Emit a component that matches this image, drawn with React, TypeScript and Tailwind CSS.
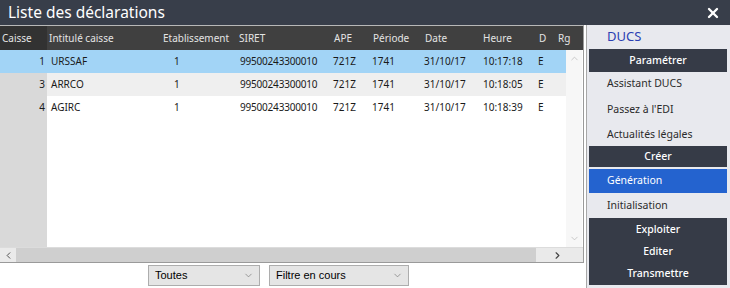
import React from "react";
import { X, ChevronUp, ChevronDown, ChevronLeft, ChevronRight } from "lucide-react";

type Row = { caisse: string; nom: string; etab: string; siret: string; ape: string; periode: string; date: string; heure: string; d: string };

const ROWS: Row[] = [
  { caisse: "1", nom: "URSSAF", etab: "1", siret: "99500243300010", ape: "721Z", periode: "1741", date: "31/10/17", heure: "10:17:18", d: "E" },
  { caisse: "3", nom: "ARRCO", etab: "1", siret: "99500243300010", ape: "721Z", periode: "1741", date: "31/10/17", heure: "10:18:05", d: "E" },
  { caisse: "4", nom: "AGIRC", etab: "1", siret: "99500243300010", ape: "721Z", periode: "1741", date: "31/10/17", heure: "10:18:39", d: "E" },
];

const font = { fontFamily: '"Noto Sans", "Open Sans", sans-serif' };

function Cells({ r }: { r: Row }) {
  return (
    <>
      <div className="w-[116px] pl-[4px]">{r.nom}</div>
      <div className="w-[75px] pl-[11px]">{r.etab}</div>
      <div className="w-[95px] pl-[2px] tracking-[-0.2px]">{r.siret}</div>
      <div className="w-[39px]">{r.ape}</div>
      <div className="w-[52px]">{r.periode}</div>
      <div className="w-[58px]">{r.date}</div>
      <div className="w-[56px] pl-[1px]">{r.heure}</div>
      <div className="w-[19px]">{r.d}</div>
    </>
  );
}

export default function App() {
  return (
    <div className="w-[730px] h-[288px] bg-white flex flex-col overflow-hidden" style={font}>
      {/* title bar */}
      <div className="h-[25px] bg-[#383e4a] flex items-center justify-between pl-[8px] pr-[9px] text-white">
        <span className="text-[15.5px] leading-none">Liste des déclarations</span>
        <X size={16} strokeWidth={3.5} />
      </div>

      <div className="flex flex-1 min-h-0">
        {/* left side */}
        <div className="w-[586px] flex flex-col">
          <div className="h-[238px] w-[584px] border-r border-b border-[#9a9a9a] border-t border-t-[#b8b8b8] flex flex-col text-[10px] text-[#1a1a1a]">
            {/* header */}
            <div className="h-[24px] flex items-center bg-[#404040] text-[#e4e4e4]">
              <div className="w-[47px] h-full flex items-center pl-[2px] bg-[#323232]">Caisse</div>
              <div className="w-[116px] pl-[2px]">Intitulé caisse</div>
              <div className="w-[76px]">Etablissement</div>
              <div className="w-[95px]">SIRET</div>
              <div className="w-[39px]">APE</div>
              <div className="w-[52px]">Période</div>
              <div className="w-[58px]">Date</div>
              <div className="w-[56px]">Heure</div>
              <div className="w-[19px]">D</div>
              <div className="w-[20px]">Rg</div>
            </div>
            {/* body */}
            <div className="flex flex-1 min-h-0">
              <div className="w-[566px] flex flex-col">
                {ROWS.map((r, i) => (
                  <div
                    key={r.caisse}
                    className={`h-[23px] flex items-center ${i === 0 ? "bg-[#a2d4f6]" : i === 1 ? "bg-[#efefef]" : "bg-white"}`}
                  >
                    <div className={`w-[47px] h-full flex items-center justify-end pr-[2px] ${i === 0 ? "" : "bg-[#d9d9d9]"}`}>{r.caisse}</div>
                    <Cells r={r} />
                  </div>
                ))}
                <div className="flex-1 flex">
                  <div className="w-[47px] bg-[#d9d9d9]" />
                </div>
              </div>
              <div className="w-[16px] bg-[#f7f7f7] flex flex-col items-center justify-between py-[3px] text-[#b4b4b4]">
                <ChevronUp size={11} strokeWidth={1.5} />
                <ChevronDown size={11} strokeWidth={1.5} />
              </div>
            </div>
            {/* horizontal scrollbar */}
            <div className="h-[15px] flex items-center bg-[#eaeaea] border-t border-[#dcdcdc]">
              <div className="w-[16px] flex justify-center text-[#444]">
                <ChevronLeft size={11} strokeWidth={2} />
              </div>
              <div className="w-[520px] h-full bg-[#cfcfcf]" />
              <div className="flex-1 flex justify-center text-[#444] pr-[4px]">
                <ChevronRight size={11} strokeWidth={2.5} />
              </div>
            </div>
          </div>
          {/* filters */}
          <div className="flex-1 flex items-center pl-[148px] gap-[9px] text-[11px] text-black" style={{ fontFamily: '"Liberation Sans", Arial, sans-serif' }}>
            <div className="w-[112px] h-[21px] bg-[#e5e5e5] border border-[#adadad] flex items-center justify-between pl-[6px] pr-[5px]">
              <span>Toutes</span>
              <ChevronDown size={11} strokeWidth={1.5} className="text-[#777]" />
            </div>
            <div className="w-[140px] h-[21px] bg-[#e5e5e5] border border-[#adadad] flex items-center justify-between pl-[6px] pr-[5px]">
              <span>Filtre en cours</span>
              <ChevronDown size={11} strokeWidth={1.5} className="text-[#777]" />
            </div>
          </div>
        </div>

        {/* right panel */}
        <div className="w-[144px] bg-[#e8e9ee] border-l border-[#a8a8a8] pl-[2px] pr-[3px] flex flex-col text-[10.5px] text-[#2b2b2b]">
          <div className="h-[24px] shrink-0 flex items-center pl-[18px] text-[13px] text-[#2b3fb3]">DUCS</div>
          <div className="h-[23px] shrink-0 bg-[#363b47] text-white flex items-center justify-center font-medium">Paramétrer</div>
          <div className="h-[24px] shrink-0 flex items-center pl-[18px]">Assistant DUCS</div>
          <div className="h-[27px] shrink-0 flex items-center pl-[18px]">Passez à l'EDI</div>
          <div className="h-[23px] shrink-0 flex items-center pl-[18px]">Actualités légales</div>
          <div className="h-[21px] shrink-0 bg-[#363b47] text-white flex items-center justify-center font-medium">Créer</div>
          <div className="h-[2px] shrink-0" />
          <div className="h-[24px] shrink-0 bg-[#2463cf] text-white flex items-center pl-[18px]">Génération</div>
          <div className="h-[25px] shrink-0 flex items-center pl-[18px]">Initialisation</div>
          <div className="h-[67px] shrink-0 bg-[#363b47] text-white flex flex-col font-medium">
            <div className="h-[23px] flex items-center justify-center">Exploiter</div>
            <div className="h-[21px] flex items-center justify-center">Editer</div>
            <div className="h-[23px] flex items-center justify-center">Transmettre</div>
          </div>
        </div>
      </div>
    </div>
  );
}
